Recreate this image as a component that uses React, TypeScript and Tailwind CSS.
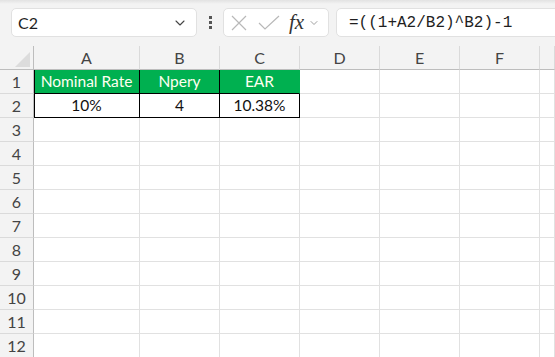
import { ChevronDown } from 'lucide-react'

const cols = ['A', 'B', 'C', 'D', 'E', 'F', '']

type Cell = { text?: string; kind?: 'head' | 'data' }

const rows: Cell[][] = [
  [{ text: 'Nominal Rate', kind: 'head' }, { text: 'Npery', kind: 'head' }, { text: 'EAR', kind: 'head' }],
  [{ text: '10%', kind: 'data' }, { text: '4', kind: 'data' }, { text: '10.38%', kind: 'data' }],
]

function FormulaBar () {
  return (
    <div className="mt-[4px] flex h-[29px] items-center">
      <div className="ml-[11px] flex h-[29px] w-[186px] shrink-0 items-center justify-between rounded-[5px] border border-[#e1e1e1] bg-white pl-[6px] pr-[8px]">
        <span className="text-[16px] text-[#1f1f1f]">C2</span>
        <ChevronDown className="h-[16px] w-[16px] text-[#444]" strokeWidth={1.6} />
      </div>
      <div className="ml-[12px] flex h-[13px] w-[3px] shrink-0 flex-col justify-between">
        <span className="h-[3px] w-[3px] bg-[#555]" />
        <span className="h-[3px] w-[3px] bg-[#555]" />
        <span className="h-[3px] w-[3px] bg-[#555]" />
      </div>
      <div className="ml-[11px] flex h-[29px] w-[106px] shrink-0 items-center rounded-[5px] border border-[#e1e1e1] bg-white">
        <svg width="18" height="18" viewBox="0 0 18 18" className="ml-[6px]">
          <path d="M2 2 L16 16 M16 2 L2 16" stroke="#b8b8b8" strokeWidth="1.2" fill="none" />
        </svg>
        <svg width="22" height="18" viewBox="0 0 22 18" className="ml-[10px]">
          <path d="M1 9 L7 15 L21 2" stroke="#b8b8b8" strokeWidth="1.2" fill="none" />
        </svg>
        <span className="ml-[9px] font-['Liberation_Serif'] text-[21px] italic leading-none text-[#333]">fx</span>
        <ChevronDown className="ml-[4px] h-[12px] w-[12px] text-[#888]" strokeWidth={1.6} />
      </div>
      <div className="ml-[7px] flex h-[29px] w-[240px] shrink-0 items-center rounded-[5px] border border-[#e1e1e1] bg-white pl-[12px]">
        <span className="font-['Liberation_Mono'] text-[16px] text-[#1f1f1f]">=((1+A2/B2)^B2)-1</span>
      </div>
    </div>
  )
}

export default function App () {
  return (
    <div className="h-[357px] w-[555px] overflow-hidden bg-[#f3f3f3] font-['Lato',sans-serif]">
      <div className="h-[4px] bg-gradient-to-b from-[#e2e2e2] to-[#f3f3f3]" />
      <FormulaBar />
      <div className="mt-[9px] grid grid-cols-[34px_106px_80px_80px_80px_80px_80px_1fr] auto-rows-[24px]">
        <div className="relative border-b border-r border-[#bdbdbd] bg-[#f3f3f3]">
          <div className="absolute bottom-[2px] right-[3px] h-0 w-0 border-b-[15px] border-l-[15px] border-b-[#dcdcdc] border-l-transparent" />
        </div>
        {cols.map((c, i) => (
          <div
            key={i}
            className="flex items-center justify-center border-b border-r border-b-[#bdbdbd] border-r-[#dadada] bg-[#f3f3f3] text-[16px] text-[#444]"
          >
            {c}
          </div>
        ))}
        {Array.from({ length: 12 }).map((_, r) => (
          <Row key={r} n={r + 1} cells={rows[r] ?? []} />
        ))}
      </div>
    </div>
  )
}

function Row ({ n, cells }: { n: number; cells: Cell[] }) {
  return (
    <>
      <div className="flex items-center justify-center border-b border-r border-b-[#dadada] border-r-[#bdbdbd] bg-[#f3f3f3] text-[16px] text-[#444]">
        {n}
      </div>
      {cols.map((_, i) => {
        const cell = cells[i]
        if (cell?.kind === 'head') {
          return (
            <div
              key={i}
              className={`flex items-center justify-center border-b border-r border-b-black bg-[#00b050] text-[15.5px] text-[#fffff0] ${
                i === 2 ? 'border-r-[#00b050]' : 'border-r-black'
              } ${i === 0 ? 'shadow-[inset_1px_0_0_#000]' : ''}`}
            >
              {cell.text}
            </div>
          )
        }
        if (cell?.kind === 'data') {
          return (
            <div
              key={i}
              className={`flex items-center justify-center border-b border-r border-black bg-white text-[15.5px] text-[#111] ${
                i === 0 ? 'shadow-[inset_1px_0_0_#000]' : ''
              }`}
            >
              {cell.text}
            </div>
          )
        }
        return <div key={i} className="border-b border-r border-[#e1e1e1] bg-white" />
      })}
    </>
  )
}
